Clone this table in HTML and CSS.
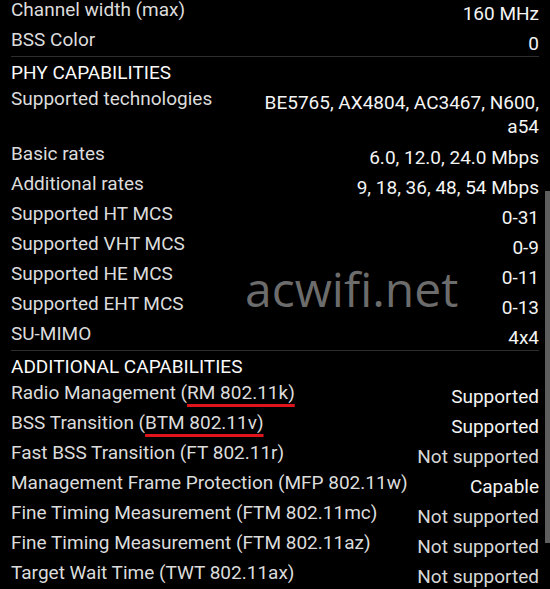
FILE: index.html
```html
<!DOCTYPE html>
<html lang="en">
<head>
<meta charset="utf-8">
<title>Wi-Fi capabilities</title>
<link rel="stylesheet" href="styles.css">
</head>
<body>
<main class="screen">
  <section class="group">
    <div class="row"><span class="label">Channel width (max)</span><span class="value">160 MHz</span></div>
    <div class="row"><span class="label">BSS Color</span><span class="value">0</span></div>
  </section>
  <hr class="divider">
  <section class="group">
    <h2 class="heading">PHY CAPABILITIES</h2>
    <div class="row"><span class="label">Supported technologies</span><span class="value wrap">BE5765, AX4804, AC3467, N600, a54</span></div>
    <div class="row"><span class="label">Basic rates</span><span class="value">6.0, 12.0, 24.0 Mbps</span></div>
    <div class="row"><span class="label">Additional rates</span><span class="value">9, 18, 36, 48, 54 Mbps</span></div>
    <div class="row"><span class="label">Supported HT MCS</span><span class="value">0-31</span></div>
    <div class="row"><span class="label">Supported VHT MCS</span><span class="value">0-9</span></div>
    <div class="row"><span class="label">Supported HE MCS</span><span class="value">0-11</span></div>
    <div class="row"><span class="label">Supported EHT MCS</span><span class="value">0-13</span></div>
    <div class="row"><span class="label">SU-MIMO</span><span class="value">4x4</span></div>
  </section>
  <hr class="divider">
  <section class="group">
    <h2 class="heading">ADDITIONAL CAPABILITIES</h2>
    <div class="row"><span class="label">Radio Management (<span class="mark">RM 802.11k)</span></span><span class="value">Supported</span></div>
    <div class="row"><span class="label">BSS Transition (<span class="mark">BTM 802.11v)</span></span><span class="value">Supported</span></div>
    <div class="row"><span class="label">Fast BSS Transition (FT 802.11r)</span><span class="value muted">Not supported</span></div>
    <div class="row"><span class="label">Management Frame Protection (MFP 802.11w)</span><span class="value">Capable</span></div>
    <div class="row"><span class="label">Fine Timing Measurement (FTM 802.11mc)</span><span class="value muted">Not supported</span></div>
    <div class="row"><span class="label">Fine Timing Measurement (FTM 802.11az)</span><span class="value muted">Not supported</span></div>
    <div class="row"><span class="label">Target Wait Time (TWT 802.11ax)</span><span class="value muted">Not supported</span></div>
  </section>
  <div class="watermark">acwifi.net</div>
  <div class="scrollbar"></div>
</main>
</body>
</html>
```
FILE: styles.css
```css
html, body {
  margin: 0;
  padding: 0;
  background: #000;
}
body {
  width: 550px;
  height: 589px;
  overflow: hidden;
  font-family: Roboto, "Liberation Sans", sans-serif;
  font-size: 19px;
  color: #dcdcdc;
}
.screen {
  position: relative;
  margin-top: -5px;
  padding: 0 11px;
}
.group {
  display: flex;
  flex-direction: column;
}
.row {
  display: flex;
  justify-content: space-between;
  align-items: flex-start;
  min-height: 30px;
  gap: 16px;
}
.label {
  line-height: 30px;
  white-space: nowrap;
}
.value {
  color: #f4f4f4;
  line-height: 23px;
  padding-top: 7px;
  text-align: right;
  white-space: nowrap;
}
.value.wrap {
  white-space: normal;
  max-width: 290px;
  line-height: 24px;
}
.value.muted {
  color: #d8d8d8;
}
.heading {
  margin: 0;
  font-size: 19px;
  font-weight: 400;
  color: #fafafa;
  padding-top: 4px;
  line-height: 22px;
}
.divider {
  border: 0;
  border-top: 1px solid #2e2e2e;
  margin: 1px 0 1px;
  height: 0;
}
.mark {
  text-decoration: underline;
  text-decoration-color: #e0141c;
  text-decoration-thickness: 3px;
  text-underline-offset: 5px;
}
.watermark {
  position: absolute;
  left: 245px;
  top: 264px;
  font-family: "Open Sans", sans-serif;
  font-size: 48px;
  color: #6c6c6c;
  line-height: 60px;
  pointer-events: none;
}
.scrollbar {
  position: absolute;
  right: 0;
  top: 196px;
  width: 5px;
  height: 352px;
  background: #5e5e5e;
}
```
